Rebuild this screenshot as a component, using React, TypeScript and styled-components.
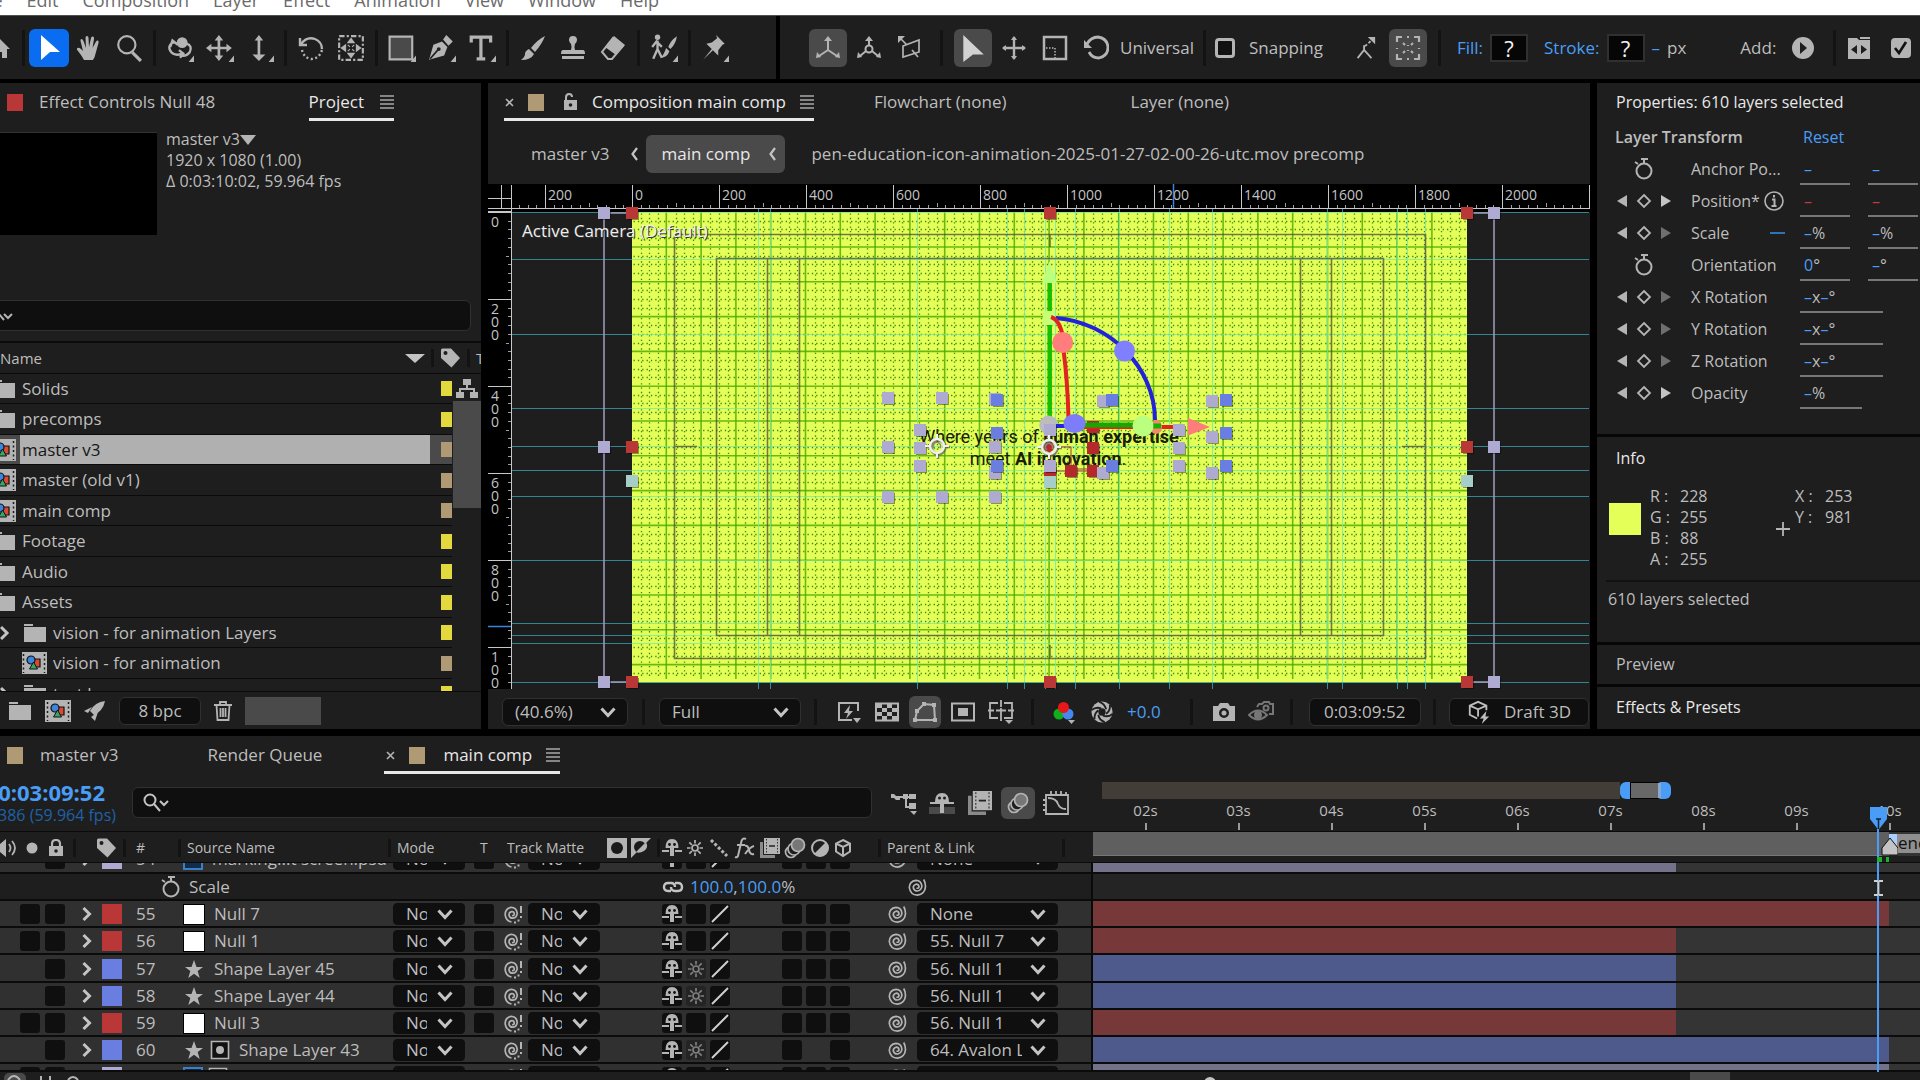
import React from "react";
import styled, { createGlobalStyle, css } from "styled-components";

const c = {
  panel: "#1e1e1e",
  well: "#0f0f0f",
  line: "#0b0b0b",
  text: "#bdbdbd",
  bright: "#e8e8e8",
  blue: "#4a9df6",
  row: "#303030",
  icon: "#b4b4b4",
  sand: "#b09a76",
  yellow: "#e4d83f",
  red: "#ba3737",
  indigo: "#6a7de0",
  lavender: "#aeaad2",
};

const Global = createGlobalStyle`
  *, *::before, *::after { box-sizing: border-box; }
  html, body { margin: 0; background: #000; }
  body { font-family: "Open Sans", "Noto Sans", sans-serif; font-size: 16px; line-height: 20px; color: ${c.text}; overflow: hidden; }
  button, input, select { font: inherit; color: inherit; }
  button { padding: 0; border: 0; background: none; }
  svg { display: block; flex: none; }
`;

/* ---------- shell ---------- */
const Shell = styled.div`
  min-height: 100vh;
  display: flex;
  flex-direction: column;
  background: #000;
`;
const MenuBar = styled.nav`
  height: 16px;
  background: #fff;
  border-bottom: 1px solid #4d524f;
  overflow: hidden;
  display: flex;
  align-items: flex-end;
  gap: 24px;
  padding: 0 0 2px;
  a { color: #6b6b6b; text-decoration: none; font-size: 18px; line-height: 26px; flex: none; }
  a:first-child { margin-left: -26px; }
`;
const ToolBar = styled.header`
  height: 63px;
  display: grid;
  grid-template-columns: 776px 1fr;
  column-gap: 4px;
  margin-bottom: 4px;
`;
const ToolGroup = styled.div<{ $start?: number }>`
  background: ${c.panel};
  display: flex;
  align-items: center;
  padding-left: ${(p) => p.$start || 0}px;
  overflow: hidden;
  white-space: nowrap;
`;
const Tool = styled.button<{ $fill?: string; $w?: number }>`
  width: ${(p) => p.$w || 40}px;
  height: 38px;
  flex: none;
  display: flex;
  align-items: center;
  justify-content: center;
  border-radius: 6px;
  background: ${(p) => p.$fill || "transparent"};
  color: ${c.icon};
`;
const ViewTool = styled(Tool)`
  height: 32px;
`;
const Divider = styled.i<{ $m?: number; $h?: number }>`
  flex: none;
  width: 3px;
  height: ${(p) => p.$h || 36}px;
  margin: 0 ${(p) => p.$m ?? 4}px;
  background: #131313;
`;
const Spacer = styled.span<{ $w?: number }>`
  flex: ${(p) => (p.$w ? "none" : "1")};
  width: ${(p) => p.$w || 0}px;
`;
const ToolLabel = styled.label<{ $blue?: boolean }>`
  font-size: 17px;
  flex: none;
  color: ${(p) => (p.$blue ? c.blue : c.text)};
`;
const Check = styled.input`
  appearance: none;
  margin: 0;
  width: 20px;
  height: 20px;
  flex: none;
  border: 3px solid ${c.icon};
  border-radius: 4px;
  background: #111;
  &:checked { background: ${c.icon}; }
`;
const CheckWrap = styled.span`
  display: grid;
  flex: none;
  > * { grid-area: 1 / 1; place-self: center; }
  svg { pointer-events: none; }
`;
const PaintButton = styled.button`
  width: 38px;
  height: 28px;
  flex: none;
  background: #060606;
  border: 2px solid #303030;
  color: #f2f2f2;
  font-size: 22px;
  line-height: 24px;
`;

const Panels = styled.main`
  display: grid;
  grid-template-columns: 481px minmax(0, 1fr) 323px;
  column-gap: 7px;
  height: 646px;
  margin-bottom: 7px;
`;
const Panel = styled.section`
  background: ${c.panel};
  display: flex;
  flex-direction: column;
  overflow: hidden;
  min-width: 0;
`;

/* ---------- tabs ---------- */
const Tabs = styled.div`
  display: flex;
  height: 38px;
  flex: none;
  font-size: 17px;
  white-space: nowrap;
`;
const Tab = styled.button<{ $active?: boolean; $ml?: number; $pl?: number; $gap?: number }>`
  display: flex;
  flex: none;
  align-items: center;
  gap: ${(p) => p.$gap || 16}px;
  margin-left: ${(p) => p.$ml || 0}px;
  padding-left: ${(p) => p.$pl || 0}px;
  padding-top: 3px;
  border-bottom: 3px solid ${(p) => (p.$active ? c.bright : "transparent")};
  color: ${(p) => (p.$active ? c.bright : c.text)};
`;
const Chip = styled.i<{ $c: string; $w?: number; $h?: number }>`
  width: ${(p) => p.$w || 16}px;
  height: ${(p) => p.$h || 17}px;
  background: ${(p) => p.$c};
  flex: none;
`;
const Hamburger = () => (
  <svg width="14" height="14" viewBox="0 0 14 14" stroke="#858585" strokeWidth="2">
    <path d="M0 1h14M0 5h14M0 9h14M0 13h14" />
  </svg>
);
const Close = () => (
  <svg width="9" height="9" viewBox="0 0 9 9" stroke={c.icon} strokeWidth="1.6">
    <path d="M1 1l7 7M8 1L1 8" />
  </svg>
);
const Chevron = ({ s = 16, w = 3 }: { s?: number; w?: number }) => (
  <svg width={s} height={s} viewBox="0 0 16 16" fill="none" stroke="#c4c4c4" strokeWidth={w}>
    <path d="M1.500 4.500L8 11.500l6.500-7" />
  </svg>
);

/* ---------- project ---------- */
const Summary = styled.div`
  display: flex;
  gap: 9px;
  height: 114px;
  padding-top: 8px;
  font-size: 16px;
  line-height: 21px;
  p { margin: 0; }
`;
const ItemName = styled.span`
  display: flex;
  align-items: center;
`;
const Thumb = styled.div`
  width: 157px;
  height: 103px;
  margin-top: 3px;
  background: #000;
  border-top: 1px solid #333;
`;
const SearchBox = styled.label`
  display: flex;
  align-items: center;
  height: 31px;
  background: ${c.well};
  border: 1px solid #303030;
  border-radius: 6px;
  padding-left: 10px;
  input { flex: 1; min-width: 0; border: 0; background: none; outline: 0; }
`;
const ProjectSearch = styled.div`
  padding: 65px 10px 10px 0;
  ${SearchBox} { padding-left: 3px; margin-left: -8px; }
`;
const ProjectTable = styled.table`
  display: block;
  flex: 1;
  min-height: 0;
  overflow: hidden;
  thead, tbody { display: block; }
  tr { display: flex; align-items: center; }
  th, td { display: flex; flex: none; align-items: center; padding: 0; font-weight: 400; }
  thead tr { height: 33px; border-top: 2px solid ${c.line}; border-bottom: 1px solid ${c.line}; font-size: 15px; }
  tbody { position: relative; }
`;
const NameHead = styled.th`
  && { width: 431px; justify-content: space-between; padding-right: 6px; }
`;
const TagHead = styled.th`
  gap: 6px;
`;
const ProjRow = styled.tr<{ $sel?: boolean }>`
  height: 30px;
  width: 452px;
  border-bottom: 1px solid ${c.line};
  background: ${(p) => (p.$sel ? "#4a4a4a" : "transparent")};
  font-size: 17px;
  &:nth-child(even) { height: 31px; }
`;
const ProjName = styled.td<{ $sel?: boolean }>`
  width: 430px;
  height: 100%;
  gap: 4px;
  margin-right: 11px;
  span {
    flex: 1; align-self: stretch; display: flex; align-items: center; padding-left: 2px;
    ${(p) => p.$sel && css`background: #b0b0b0; color: #161616;`}
  }
`;
const IconSlot = styled.i<{ $w: number; $end?: boolean }>`
  width: ${(p) => p.$w}px;
  flex: none;
  display: flex;
  justify-content: ${(p) => (p.$end ? "flex-end" : "flex-start")};
  overflow: hidden;
`;
const ScrollCol = styled.div`
  position: absolute;
  right: 0;
  top: 0;
  width: 28px;
  padding-top: 5px;
  display: flex;
  flex-direction: column;
  align-items: center;
  gap: 3px;
  i { width: 28px; height: 107px; background: #4a4a4a; }
`;
const ProjectFoot = styled.footer`
  height: 38px;
  flex: none;
  display: flex;
  align-items: center;
  padding-left: 8px;
  border-top: 1px solid ${c.line};
  gap: 13px;
`;
const Pill = styled.button<{ $w: number }>`
  width: ${(p) => p.$w}px;
  height: 28px;
  display: flex;
  align-items: center;
  justify-content: center;
  gap: 13px;
  flex: none;
  background: ${c.well};
  border: 1px solid #303030;
  border-radius: 6px;
  font-size: 17px;
`;

const Folder = () => (
  <svg width="24" height="20" viewBox="0 0 24 20" fill={c.icon}>
    <path d="M1 1h9v2H1zM1 4h22v15H1z" />
  </svg>
);
const CompIcon = () => (
  <svg width="26" height="22" viewBox="0 0 26 22">
    <path fill={c.icon} d="M0 0h26v22H0z" />
    <path stroke="#1a1a1a" strokeWidth="1.500" strokeDasharray="2 2.500" d="M2.500 2v19M23.500 2v19" />
    <path d="M12 7h7v8h-6z" fill="#d94a35" stroke="#111" strokeWidth="1.200" />
    <circle cx="10" cy="8" r="4" fill="#3d84dc" stroke="#111" strokeWidth="1.200" />
    <path d="M12.500 10l4 7h-8z" fill="#35a866" stroke="#111" />
  </svg>
);
const TagIcon = () => (
  <svg width="21" height="20" viewBox="0 0 21 20">
    <path fill={c.icon} d="M1 2q0-1.500 1.500-1.500H11l9 9.500-8.500 9.500L1 10z" />
    <circle cx="5.500" cy="5" r="2" fill={c.panel} />
  </svg>
);

type P = { k: "folder" | "comp"; n: string; c: string; sel?: boolean; sub?: boolean; open?: boolean };
const project: P[] = [
  { k: "folder", n: "Solids", c: c.yellow },
  { k: "folder", n: "precomps", c: c.yellow },
  { k: "comp", n: "master v3", c: c.sand, sel: true },
  { k: "comp", n: "master (old v1)", c: c.sand },
  { k: "comp", n: "main comp", c: c.sand },
  { k: "folder", n: "Footage", c: c.yellow },
  { k: "folder", n: "Audio", c: c.yellow },
  { k: "folder", n: "Assets", c: c.yellow },
  { k: "folder", n: "vision - for animation Layers", c: c.yellow, sub: true, open: true },
  { k: "comp", n: "vision - for animation", c: c.sand, sub: true },
  { k: "folder", n: "test logo", c: c.yellow, sub: true, open: true },
];

const ProjectPanel = () => (
  <Panel>
    <Tabs>
      <Tab $ml={7}>
        <Chip $c={c.red} />
        Effect Controls Null 48
      </Tab>
      <Spacer />
      <Tab $active>
        Project <Hamburger />
      </Tab>
      <Spacer $w={87} />
    </Tabs>
    <Summary>
      <Thumb />
      <p>
        <ItemName>
          master v3
          <svg width="16" height="10" viewBox="0 0 16 10" fill={c.icon}><path d="M0 0h16L8 10z" /></svg>
        </ItemName>
        1920 x 1080 (1.00)
        <br />Δ 0:03:10:02, 59.964 fps
      </p>
    </Summary>
    <ProjectSearch>
      <SearchBox>
        <svg width="18" height="14" viewBox="0 0 18 14" fill="none" stroke={c.icon} strokeWidth="2">
          <path d="M3 5l5 6M8 5l4 4 4-4" />
        </svg>
        <input aria-label="Search project" />
      </SearchBox>
    </ProjectSearch>
    <ProjectTable>
      <thead>
        <tr>
          <NameHead>
            Name
            <svg width="20" height="10" viewBox="0 0 20 10" fill="#c4c4c4">
              <path d="M0 1h20L10 10z" />
            </svg>
          </NameHead>
          <TagHead>
            <Divider $h={18} $m={0} />
            <TagIcon />
            <Divider $h={18} $m={0} />T
          </TagHead>
        </tr>
      </thead>
      <tbody>
        {project.map((r) => (
          <ProjRow key={r.n} $sel={r.sel}>
            <ProjName $sel={r.sel}>
              {r.sub && (
                <IconSlot $w={18}>
                  {r.open && (
                    <svg width="10" height="16" viewBox="0 0 10 16" fill="none" stroke="#c4c4c4" strokeWidth="3">
                      <path d="M1 2l6 6-6 6" />
                    </svg>
                  )}
                </IconSlot>
              )}
              <IconSlot $w={r.sub ? 25 : 16} $end>
                {r.k === "folder" ? <Folder /> : <CompIcon />}
              </IconSlot>
              <span>{r.n}</span>
            </ProjName>
            <td>
              <Chip $c={r.c} $w={11} $h={15} />
            </td>
          </ProjRow>
        ))}
        <tr>
          <td>
            <ScrollCol>
              <svg width="22" height="19" viewBox="0 0 22 19" fill={c.icon}>
                <path d="M7 0h8v6H7zM0 13h8v6H0zM14 13h8v6h-8zM10 6h2v3h7v4h-2v-2H5v2H3V9h7z" />
              </svg>
              <i />
            </ScrollCol>
          </td>
        </tr>
      </tbody>
    </ProjectTable>
    <ProjectFoot>
      <Folder />
      <CompIcon />
      <svg width="22" height="22" viewBox="0 0 22 22" fill={c.icon}>
        <path d="M21 1Q11 2 6 11l4 4Q19 11 21 1zM0 11l8-4-4 6zM11 21l3-9-7 5z" />
      </svg>
      <Pill $w={82}>8 bpc</Pill>
      <svg width="18" height="20" viewBox="0 0 18 20" fill="none" stroke={c.icon} strokeWidth="1.800">
        <path d="M0 4h18M6 4V1h6v3M2.500 4l1 15h11l1-15M6.500 7v9M9 7v9M11.500 7v9" />
      </svg>
      <Chip $c="#4a4a4a" $w={76} $h={28} />
    </ProjectFoot>
  </Panel>
);

/* ---------- composition ---------- */
const Crumbs = styled.nav`
  height: 63px;
  flex: none;
  display: flex;
  align-items: center;
  padding: 2px 0 0 43px;
  font-size: 17px;
  gap: 22px;
  white-space: nowrap;
`;
const Crumb = styled.a<{ $on?: boolean }>`
  display: flex;
  align-items: center;
  justify-content: space-between;
  color: ${c.text};
  text-decoration: none;
  ${(p) => p.$on && css`
    width: 139px; height: 38px; margin: 0 4px 0 -14px; padding: 0 9px 0 15px;
    background: #4a4a4a; border-radius: 6px; color: ${c.bright};
  `}
`;
const Back = () => (
  <svg width="7" height="14" viewBox="0 0 7 14" fill="none" stroke="#c4c4c4" strokeWidth="2.200">
    <path d="M6 1L1.500 7 6 13" />
  </svg>
);
const Stage = styled.div`
  flex: 1;
  min-height: 0;
  overflow: hidden;
`;
const ViewBar = styled.footer`
  height: 40px;
  flex: none;
  display: flex;
  align-items: center;
  padding: 6px 1px 0 14px;
  white-space: nowrap;
`;
const Pick = styled.span<{ $w: number; $h?: number; $clip?: number; $b?: boolean }>`
  display: grid;
  flex: none;
  width: ${(p) => p.$w}px;
  height: ${(p) => p.$h || 28}px;
  background: ${c.well};
  border: 1px solid ${(p) => (p.$b ? "#303030" : c.well)};
  border-radius: ${(p) => (p.$b ? 6 : 4)}px;
  align-items: center;
  > * { grid-area: 1 / 1; }
  svg { justify-self: end; margin-right: 11px; pointer-events: none; }
  select {
    appearance: none;
    border: 0;
    outline: 0;
    background: none;
    width: ${(p) => p.$clip || p.$w - 30}px;
    padding: 0 0 0 12px;
    overflow: hidden;
    text-overflow: clip;
    font-size: 17px;
  }
`;
const Select = ({ w, h, clip, b, v, label }: { w: number; h?: number; clip?: number; b?: boolean; v: string; label: string }) => (
  <Pick $w={w} $h={h} $clip={clip} $b={b}>
    <select aria-label={label} defaultValue={v}>
      <option>{v}</option>
    </select>
    <Chevron />
  </Pick>
);

const X0 = 632;
const Y0 = 212;
const U = 0.435;
const range = (a: number, b: number, s = 1) => {
  const out: number[] = [];
  for (let i = a; i <= b; i += s) out.push(i);
  return out;
};
const vGuides = [758.5, 770.5, 917.5, 1007.5, 1024.5, 1045.5, 1055.5, 1075.5, 1119.5, 1169.5, 1212.5, 1327.5, 1342.5, 1397.5, 1407.5, 1425.5];
const hGuides = [212.5, 259.5, 334.5, 408.5, 446.5, 470.5, 496.5, 560.5, 623.5, 635.5, 643.5, 682.5];
const lav = [[888, 398], [942, 398], [995, 399], [920, 430], [920, 448], [920, 466], [888, 447], [995, 447], [995, 473], [888, 497], [942, 497], [995, 497], [1103, 401], [1103, 473], [1179, 430], [1179, 448], [1179, 466], [1212, 401], [1212, 437], [1212, 473]];
const blu = [[997, 400], [997, 433], [997, 466], [1112, 400], [1112, 466], [1226, 400], [1226, 433], [1226, 466]];
const redBack = [[1093, 427], [1093, 448], [1093, 471], [1071, 471], [1050, 471]];
const edgeLav = [604, 1494].flatMap((x) => [213, 447, 682].map((y) => [x, y]));
const edgeRed = [632, 1467].flatMap((x) => [213, 447, 682].map((y) => [x, y])).concat([[1050, 213], [1050, 682]]);

const Handles = ({ at, fill }: { at: number[][]; fill: string }) => (
  <g>
    {at.map(([x, y], i) => (
      <g key={i}>
        <rect x={x - 4} y={y - 4} width="11" height="11" fill="#00000066" />
        <rect x={x - 6} y={y - 6} width="12" height="12" fill={fill} />
      </g>
    ))}
  </g>
);
const Anchor = ({ x, y }: { x: number; y: number }) => (
  <g transform={`translate(${x} ${y})`} fill="none">
    <g stroke="#5a5a48" strokeOpacity=".7" transform="translate(1 1)">
      <path d="M0-12v5M0 7v5M-12 0h5M7 0h5" strokeWidth="2.500" />
      <circle r="7" strokeWidth="3.500" />
    </g>
    <path d="M0-12v5M0 7v5M-12 0h5M7 0h5" stroke="#f0f0f0" strokeWidth="2" />
    <circle r="7" stroke="#f0f0f0" strokeWidth="2.500" />
    <path d="M-2 3a3.600 3.600 0 1 1 5-1" stroke="#888" strokeWidth="1.500" />
  </g>
);

const Viewer = () => (
  <svg width="1102" height="505" viewBox="488 184 1102 505" fontFamily='"Open Sans", sans-serif'>
    <defs>
      <clipPath id="comp"><path d="M632 212h835v470H632z" /></clipPath>
    </defs>
    <path fill="#000" d="M488 184h1102v28H488zM488 184h24v505h-24z" />
    <path fill={c.panel} d="M512 212h1078v477H512z" />
    <path fill="#e4ff58" d="M632 212h835v470H632z" />
    {/* proportional grid: dotted subdivisions under solid main lines */}
    <g stroke="#2f7a00" strokeWidth="1.300" strokeOpacity=".9" strokeDasharray="1.300 3.050" strokeDashoffset="-1.500" clipPath="url(#comp)">
      {range(1, 95).filter((i) => i % 4).map((i) => <path key={i} d={`M${Math.round(X0 + i * 8.7) + 0.5} 212v467`} />)}
      {range(1, 53).filter((i) => i % 4).map((i) => <path key={i} d={`M632 ${Math.round(Y0 + i * 8.7) + 0.5}h835`} />)}
    </g>
    <g stroke="#4aa800" strokeWidth="1.600" strokeOpacity=".8" clipPath="url(#comp)">
      {range(1, 23).map((i) => <path key={i} d={`M${X0 + i * 34.8 - 0.5} 212v467`} />)}
      {range(1, 13).map((i) => <path key={i} d={`M632 ${Y0 + i * 34.8 + 0.2}h835`} />)}
    </g>
    <g stroke="#38a9b5">
      {hGuides.map((y) => (
        <g key={y}>
          <path d={`M512 ${y}h120M1467 ${y}h122`} strokeOpacity=".75" />
          <path d={`M632 ${y}h835`} stroke="#6be8a8" strokeOpacity=".7" />
        </g>
      ))}
      {vGuides.map((x) => (
        <g key={x}>
          <path d={`M${x} 682v7M${x} 209v3`} strokeOpacity=".8" />
          <path d={`M${x} 212v470`} stroke="#6bebb4" strokeOpacity=".8" />
        </g>
      ))}
    </g>
    <path d="M674.500 234.500h751v424h-751zM716.500 258.500h667v377h-667zM767.500 258.500v377M799.500 258.500v377M1300.500 258.500v377M1331.500 258.500v377M675 446.500h22M1402 446.500h23M1050 235v12M1050 645v14" fill="none" stroke="#4f4a3a" strokeOpacity=".75" strokeWidth="1.600" />
    <path d="M604 213v470M1494 213v470M604 213h28M604 682h28M1467 213h27M1467 682h27" stroke="#a19fc0" strokeWidth="1.500" />

    {/* rulers */}
    <g stroke="#c8c8c8" fill="none">
      <path d="M488 208.500h1101M488 211.500h24M511.500 185v504M501.500 185v23M488 198.500h23M1589.500 185v24" />
      {range(-200, 2000, 200).map((v) => <path key={v} d={`M${Math.round(X0 + v * U) + 0.5} 185v23`} />)}
      {range(-260, 2180, 20).map((v) => <path key={v} strokeOpacity=".8" d={`M${Math.round(X0 + v * U) + 0.5} ${v % 100 === 0 ? 203 : 205}v4`} />)}
      {range(0, 1000, 200).map((v) => <path key={v} d={`M488 ${Math.round(Y0 + v * U) + 0.5}h23`} />)}
      {range(0, 1080, 20).map((v) => <path key={v} strokeOpacity=".8" d={`M${v % 100 === 0 ? 506 : 508} ${Math.round(Y0 + v * U) + 0.5}h3`} />)}
    </g>
    <g fill="#c4c4c4" fontSize="14">
      {range(-200, 2000, 200).map((v) => <text key={v} x={X0 + v * U + 3} y="200">{Math.abs(v)}</text>)}
      {range(0, 1000, 200).map((v) =>
        String(v).slice(0, 3).split("").map((d, i) => (
          <text key={`${v}-${i}`} x="491" y={Y0 + v * U + 15 + i * 13}>{d}</text>
        ))
      )}
    </g>
    <path d="M1173.500 184v24M488 626.500h23" stroke="#3c83dd" strokeWidth="1.500" />

    <g fontSize="17">
      <text x="523" y="238" fill="#333" aria-hidden="true">Active Camera (Default)</text>
      <text x="522" y="237" fill="#eeeeee">Active Camera (Default)</text>
    </g>

    {/* artwork copy */}
    <g fontFamily="Roboto, sans-serif" fontSize="18" fill="#18200a" textAnchor="middle">
      <text x="1049" y="443">Where years of <tspan fontWeight="700">human expertise</tspan></text>
      <text x="1048" y="465">meet <tspan fontWeight="700">AI innovation</tspan>.</text>
    </g>

    <path d="M1050 447h21v22h22M1050 447v24h43" fill="none" stroke="#a83030" strokeWidth="1" />
    <Handles at={redBack} fill="#b5282c" />
    <Handles at={edgeLav} fill={c.lavender} />
    <Handles at={edgeRed} fill={c.red} />
    <Handles at={[[632, 481], [1467, 481], [1050, 482]]} fill="#a6cdc8" />

    {/* transform gizmo */}
    <g fill="none" strokeWidth="4">
      <path d="M1049.700 283v28M1049.700 325v100" stroke="#16c000" strokeWidth="4.500" />
      <path d="M1042 283l7.500-22 7.500 22z" fill="#baff7d" />
      <path d="M1043 311h12v14h-12z" fill="#c6ff74" />
      <circle cx="1048.700" cy="425" r="9.500" fill="#bcbcbc" />
      <path d="M1054 426h12" stroke="#2222e0" />
      <path d="M1056 318C1110 322 1155 368 1155 420" stroke="#2222d8" />
      <path d="M1051 317q10 3 13 26M1063.500 350q4 30 5 68" stroke="#e32222" />
      <path d="M1084 427h51M1161 427h14" stroke="#e32222" />
      <path d="M1084 425h53" stroke="#16a800" strokeWidth="5" />
      <circle cx="1062.700" cy="342.500" r="10.500" fill="#ff7d7d" />
      <circle cx="1124.500" cy="351" r="10.500" fill="#7f7fff" />
      <ellipse cx="1074.500" cy="423.500" rx="11" ry="9.500" fill="#7d7dfa" />
      <ellipse cx="1156" cy="427" rx="6" ry="7" fill="#f08a6a" />
      <path d="M1152 426h9" stroke="#16b000" strokeWidth="5" />
      <circle cx="1143" cy="426" r="10.500" fill="#bbff7f" />
      <path d="M1188 418l22 9-22 8.500z" fill="#ff7c7c" />
    </g>
    <Handles at={lav} fill={c.lavender} />
    <Handles at={blu} fill={c.indigo} />
    <Handles at={[[1050, 430], [1050, 466]]} fill={c.lavender} />
    <Anchor x={937} y={446} />
    <circle cx="1049" cy="447" r="5" fill="#b5282c" />
    <Anchor x={1049} y={447} />
  </svg>
);

const I = ({ children, s = 26, f }: { children: React.ReactNode; s?: number; f?: boolean }) => (
  <svg width={s} height={s} viewBox="0 0 26 26" fill={f ? "currentColor" : "none"} stroke={f ? "none" : "currentColor"} strokeWidth="2">
    {children}
  </svg>
);
const Corner = () => <path d="M26 20v6h-5z" fill="currentColor" stroke="none" />;

const CompPanel = () => (
  <Panel>
    <Tabs>
      <Tab $active $ml={16} $pl={1} $gap={14}>
        <Close />
        <Chip $c={c.sand} />
        <svg width="20" height="18" viewBox="-5 0 20 18">
          <path d="M3 8V4.500Q3 1 6 1t3 3" fill="none" stroke={c.icon} strokeWidth="2" />
          <path fill={c.icon} d="M1 7h13v10H1z" />
          <circle cx="7.500" cy="12" r="1.800" fill={c.panel} />
        </svg>
        Composition main comp
        <Hamburger />
      </Tab>
      <Tab $ml={60}>Flowchart (none)</Tab>
      <Tab $ml={124}>Layer (none)</Tab>
    </Tabs>
    <Crumbs>
      <Crumb href="#">master v3</Crumb>
      <Back />
      <Crumb href="#" $on>
        main comp <Back />
      </Crumb>
      <Crumb href="#">pen-education-icon-animation-2025-01-27-02-00-26-utc.mov precomp</Crumb>
    </Crumbs>
    <Stage>
      <Viewer />
    </Stage>
    <ViewBar>
      <Select w={126} b v="(40.6%)" label="Magnification" />
      <Divider $m={14} $h={26} />
      <Select w={142} b v="Full" label="Resolution" />
      <Divider $m={13} $h={26} />
      <ViewTool $w={38}><I><path d="M22 12V4H3v17h13" /><path d="M14 6l-6 8h4l-2 6 7-8h-4z" fill="currentColor" stroke="none" /><path d="M17 19h8l-4 5z" fill="currentColor" stroke="none" /></I></ViewTool>
      <ViewTool $w={38}><I><path d="M2 4.500h22v17H2z" /><path d="M3 5h5v4H3zM13 5h5v4h-5zM8 9h5v4H8zM18 9h5v4h-5zM3 13h5v4H3zM13 13h5v4h-5zM8 17h5v4H8zM18 17h5v4h-5z" fill="currentColor" stroke="none" /></I></ViewTool>
      <Spacer $w={3} />
      <ViewTool $w={32} $fill="#4a4a4a"><I><path d="M3 21l2-9 7-7 10 1 1 15z" /><path d="M1 19h4v4H1zM3 10h4v4H3zM10 3h4v4h-4zM20 4h4v4h-4zM21 19h4v4h-4z" fill="currentColor" stroke="none" /></I></ViewTool>
      <Spacer $w={3} />
      <ViewTool $w={38}><I><path d="M2 4.500h22v17H2z" /><path d="M8 9h10v8H8z" fill="currentColor" stroke="none" /></I></ViewTool>
      <ViewTool $w={38}><I><path d="M10 4H2v15h8M16 4h8v15h-8M13 1v7M13 14v8M0 11.500h6M20 11.500h6M8 11.500h10M13 9v5" strokeWidth="1.800" /><path d="M17 21h8l-4 4z" fill="currentColor" stroke="none" /></I></ViewTool>
      <Divider $m={11} $h={26} />
      <ViewTool $w={38}>
        <svg width="24" height="24" viewBox="0 0 24 24"><circle cx="7" cy="14" r="5.500" fill="#0fae1c" /><circle cx="16" cy="14" r="5.500" fill="#4787f0" /><circle cx="11.500" cy="7.500" r="5.500" fill="#ea1717" /><path d="M16 20h7l-3.500 4z" fill={c.icon} /></svg>
      </ViewTool>
      <ViewTool $w={38}>
        <svg width="22" height="22" viewBox="0 0 24 24" fill={c.icon}>
          <circle cx="12" cy="12" r="11.500" />
          <circle cx="12" cy="12" r="4" fill={c.panel} />
          <path d="M9 1q6 2 7.500 8M20.500 4q1 6-4 10M23.500 14q-4.500 4-10.500 2M15 23q-6-2-7-8M4 20q-1-6 4-10M.5 10Q5 6 11 8" fill="none" stroke={c.panel} strokeWidth="2" />
        </svg>
      </ViewTool>
      <Spacer $w={6} />
      <ToolLabel as="span" $blue>+0.0</ToolLabel>
      <Spacer $w={11} />
      <Divider $m={18} $h={26} />
      <ViewTool $w={26}><I><path fillRule="evenodd" d="M2 7h5l2-3h8l2 3h5v15H2zM13 9a5 5 0 100 10 5 5 0 000-10zM13 11.500a2.500 2.500 0 110 5 2.500 2.500 0 010-5z" fill="currentColor" stroke="none" /></I></ViewTool>
      <Spacer $w={11} />
      <ViewTool $w={26}>
        <svg width="26" height="26" viewBox="0 0 26 26" fill="none" stroke="#777" strokeWidth="2"><path d="M1 16q9-9 18 0-9 9-18 0z" /><circle cx="10" cy="16" r="3" fill="#777" /><path d="M9 8l2-3h3l2-2h5l1 2h3v10h-4" /><circle cx="18" cy="9" r="2.500" /></svg>
      </ViewTool>
      <Divider $m={16} $h={26} />
      <Pill $w={112}>0:03:09:52</Pill>
      <Spacer />
      <Divider $m={0} $h={26} />
      <Spacer />
      <Pill $w={140}>
        <I s={24}><path d="M11 20l-8-4V6l9-4 9 4v5M3 6l9 4 9-4M12 10v8" /><path d="M21 12l-7 8h4l-2 6 8-8h-4z" fill="currentColor" stroke="none" /></I>
        Draft 3D
      </Pill>
    </ViewBar>
  </Panel>
);

/* ---------- properties / info ---------- */
const Title = styled.h2<{ $h: number; $dim?: boolean; $bt?: boolean }>`
  margin: 0;
  height: ${(p) => p.$h}px;
  flex: none;
  padding: 0 0 ${(p) => (p.$bt ? 2 : 0)}px 19px;
  display: flex;
  align-items: center;
  font-size: 16px;
  font-weight: 400;
  color: ${(p) => (p.$dim ? c.text : c.bright)};
  border-top: ${(p) => (p.$bt ? 3 : 0)}px solid #060606;
`;
const PropHead = styled.div`
  display: grid;
  grid-template-columns: 188px 1fr;
  padding-left: 18px;
  height: 32px;
  align-items: center;
  flex: none;
  font-size: 16px;
  b { font-weight: 600; }
  button { color: ${c.blue}; justify-self: start; }
`;
const PropRow = styled.div`
  display: grid;
  grid-template-columns: 74px 79px 30px 68px 1fr;
  padding-left: 20px;
  height: 32px;
  align-items: end;
  flex: none;
  white-space: nowrap;
`;
const PropCell = styled.span<{ $w?: number }>`
  width: ${(p) => (p.$w ? `${p.$w}px` : "auto")};
  height: 30px;
  display: flex;
  align-items: center;
  border-bottom: 2px solid ${(p) => (p.$w ? "#777" : "transparent")};
  padding-left: ${(p) => (p.$w ? 4 : 0)}px;
  em { font-style: normal; color: ${c.blue}; }
  em.red { color: #c93b3b; }
`;
const Stopwatch = () => (
  <svg width="20" height="22" viewBox="0 0 20 22" fill="none" stroke={c.icon} strokeWidth="2">
    <circle cx="10" cy="13" r="7.500" />
    <path d="M10 5V1M7 1h7M1 4l3 2" />
  </svg>
);
const KeyNav = ({ on }: { on?: boolean }) => (
  <svg width="54" height="16" viewBox="0 0 54 16">
    <path d="M10 2v12L0 8z" fill={c.icon} />
    <path d="M27 2l6 6-6 6-6-6z" fill="none" stroke={c.icon} strokeWidth="1.800" />
    <path d="M44 2v12l10-6z" fill={on ? "#c4c4c4" : "#6f6f6f"} />
  </svg>
);
const D = ({ red }: { red?: boolean }) => <em className={red ? "red" : undefined}>–</em>;
const props: { n: string; nav: 0 | 1 | 2; extra?: React.ReactNode; a: React.ReactNode; b?: React.ReactNode; w?: number }[] = [
  { n: "Anchor Po...", nav: 0, a: <D />, b: <D /> },
  {
    n: "Position*", nav: 2, a: <D red />, b: <D red />,
    extra: (
      <svg width="20" height="20" viewBox="6 0 20 20" overflow="visible" fill="none" stroke={c.icon} strokeWidth="1.600">
        <circle cx="10" cy="10" r="9" /><path d="M10 4v2.500M8 8.500h2.500V15M7.500 15h5" strokeWidth="2" />
      </svg>
    ),
  },
  { n: "Scale", nav: 1, a: <><D />%</>, b: <><D />%</>, extra: <Chip $c="#2f72b8" $w={15} $h={2} /> },
  { n: "Orientation", nav: 0, a: <><em>0</em>°</>, b: <><D />°</> },
  { n: "X Rotation", nav: 1, a: <><D />x<D />°</>, w: 83 },
  { n: "Y Rotation", nav: 1, a: <><D />x<D />°</>, w: 83 },
  { n: "Z Rotation", nav: 1, a: <><D />x<D />°</>, w: 83 },
  { n: "Opacity", nav: 2, a: <><D />%</>, w: 62 },
];
const InfoBody = styled.div`
  display: grid;
  grid-template-columns: 32px 117px 10px 1fr;
  column-gap: 9px;
  padding: 6px 0 8px 12px;
  height: 100px;
  flex: none;
  line-height: 21px;
  dl { margin: 0; display: grid; grid-template-columns: 30px 1fr; align-content: start; }
  dd { margin: 0; }
`;
const InfoSwatch = styled.i`
  height: 32px;
  margin-top: 17px;
  background: #e4ff58;
`;
const InfoNote = styled.p`
  margin: 0 0 0 9px;
  height: 62px;
  flex: none;
  border-top: 2px solid #121212;
  padding: 7px 0 0 2px;
`;

const SidePanel = () => (
  <Panel>
    <Title $h={38}>Properties: 610 layers selected</Title>
    <PropHead>
      <b>Layer Transform</b>
      <button>Reset</button>
    </PropHead>
    {props.map((p) => (
      <PropRow key={p.n}>
        <PropCell>{p.nav ? <KeyNav on={p.nav === 2} /> : <><Spacer $w={17} /><Stopwatch /></>}</PropCell>
        <PropCell>{p.n}</PropCell>
        <PropCell>{p.extra}</PropCell>
        <PropCell $w={p.w || 50}>{p.a}</PropCell>
        {p.b && <PropCell $w={50}>{p.b}</PropCell>}
      </PropRow>
    ))}
    <Spacer />
    <Title $h={46} $bt>Info</Title>
    <InfoBody>
      <InfoSwatch />
      <dl>
        <dt>R :</dt><dd>228</dd><dt>G :</dt><dd>255</dd><dt>B :</dt><dd>88</dd><dt>A :</dt><dd>255</dd>
      </dl>
      <svg width="14" height="60" viewBox="0 0 14 60" stroke={c.icon} strokeWidth="1.800"><path d="M0 43h14M7 36v14" /></svg>
      <dl>
        <dt>X :</dt><dd>253</dd><dt>Y :</dt><dd>981</dd>
      </dl>
    </InfoBody>
    <InfoNote>610 layers selected</InfoNote>
    <Title $h={42} $bt $dim>Preview</Title>
    <Title $h={45} $bt>Effects &amp; Presets</Title>
  </Panel>
);

/* ---------- timeline ---------- */
const LEFT = 1091;
const Timeline = styled.section`
  position: relative;
  flex: 1;
  background: ${c.panel};
  overflow: hidden;
  display: flex;
  flex-direction: column;
`;
const Split = styled.div`
  display: grid;
  grid-template-columns: ${LEFT}px minmax(0, 1fr);
  column-gap: 2px;
  height: 57px;
  flex: none;
`;
const Controls = styled.div`
  display: flex;
  align-items: center;
  ${SearchBox} { width: 740px; margin-left: auto; }
`;
const Clock = styled.div`
  width: 116px;
  flex: none;
  display: flex;
  flex-direction: column;
  white-space: nowrap;
  strong { color: ${c.blue}; font-size: 22px; line-height: 25px; align-self: flex-end; margin-right: 11px; }
  span { color: #1f62a8; font-size: 16px; align-self: flex-end; }
`;
const TimeNav = styled.div`
  display: flex;
  height: 17px;
  margin: 8px 0 0 9px;
  i { height: 17px; }
  i:nth-child(1) { width: 518px; background: #433d37; }
  i:nth-child(2) { width: 10px; background: ${c.blue}; border-radius: 6px 0 0 6px; }
  i:nth-child(3) { width: 31px; background: #686868; border: 1px solid #000; border-right: 3px solid #8aa8cc; }
  i:nth-child(4) { width: 10px; background: ${c.blue}; border-radius: 0 6px 6px 0; }
`;
const Ruler = styled.ol`
  list-style: none;
  margin: 0 0 0 6px;
  padding: 0;
  display: flex;
  height: 31px;
  font-size: 15px;
  li { width: 93px; flex: none; display: flex; flex-direction: column; align-items: center; justify-content: space-between; line-height: 22px; }
  li::after { content: ""; width: 2px; height: 7px; background: #9a9a9a; }
`;
const WorkArea = styled.div`
  height: 24px;
  display: flex;
  background: #343434;
  i { width: 796px; background: #5f5f5f; border-bottom: 1px solid #777; }
`;
const Marker = styled.span`
  margin-top: 2px;
  height: 19px;
  flex: 1;
  background: #8f8f8f;
  border-left: 8px solid #a8d0ff;
  padding-left: 1px;
  color: #111;
  font-size: 17px;
  line-height: 18px;
  overflow: hidden;
`;
const LayerTable = styled.table`
  display: block;
  thead, tbody { display: block; }
  th, td { display: flex; align-items: center; padding: 0; font-weight: 400; min-width: 0; }
`;
const HeadRow = styled.tr`
  display: grid;
  grid-template-columns: 136px 51px 210px 74px 36px 100px 55px 225px 204px 2px minmax(0, 1fr);
  height: 32px;
  border-top: 1px solid ${c.line};
  border-bottom: 1px solid ${c.line};
  font-size: 14px;
  white-space: nowrap;
  th { gap: 4px; padding-top: 1px; }
  th:last-child { display: block; padding: 0; }
`;
const Row = styled.tr<{ $h: number; $prop?: boolean; $end?: boolean }>`
  display: grid;
  grid-template-columns: 82px 20px 34px 47px 210px 81px 29px 25px 134px 225px 30px 174px minmax(0, 1fr);
  grid-template-rows: 100%;
  height: ${(p) => p.$h}px;
  overflow: hidden;
  align-items: ${(p) => (p.$end ? "end" : "start")};
  background: ${(p) => (p.$prop ? c.panel : c.row)};
  border-bottom: 2px solid ${c.line};
  font-size: 17px;
  white-space: nowrap;
  td { height: ${(p) => (p.$h < 20 ? 26 : p.$h - 1)}px; gap: 5px; }
`;
const SwitchCell = styled.td`
  && { gap: 4px; }
`;
const Box = styled.i<{ $off?: boolean; $lit?: boolean }>`
  width: 20px;
  height: 20px;
  flex: none;
  border-radius: 3px;
  display: flex;
  align-items: center;
  justify-content: center;
  background: ${(p) => (p.$off ? "transparent" : p.$lit ? "#242424" : "#0f0f0f")};
`;
const NullIcon = styled.i`
  width: 22px;
  height: 21px;
  flex: none;
  background: #fff;
  border: 1px solid #000;
`;
const LayerName = styled.span`
  padding-left: 4px;
`;
const PsdIcon = styled.i`
  width: 20px;
  height: 21px;
  flex: none;
  background: #0f2c4c;
  border: 2px solid #3f7fc0;
`;
const Track = styled.td`
  border-left: 2px solid #0a0a0a;
  background: #343434;
`;
const PropTrack = styled.td`
  border-left: 2px solid #0a0a0a;
  background: #242424;
`;
const Bar = styled.i<{ $w: number; $c: string }>`
  width: ${(p) => p.$w}px;
  align-self: stretch;
  background: ${(p) => p.$c};
`;
const Value = styled.span`
  em { color: ${c.blue}; font-style: normal; }
`;
const Playhead = styled.div`
  position: absolute;
  left: 1868px;
  top: 71px;
  pointer-events: none;
`;
const Bottom = styled.footer`
  flex: none;
  height: 8px;
  display: grid;
  grid-template-columns: 1200px 490px 40px;
  overflow: hidden;
  > i:last-child { background: #4a4a4a; }
`;
const Knob = styled.i`
  width: 12px;
  height: 12px;
  margin: 5px 0 0 4px;
  border-radius: 6px;
  background: #c4c4c4;
`;

const Spiral = ({ dots }: { dots?: boolean }) => (
  <svg width="20" height="20" viewBox="0 0 20 20" fill="none" stroke={c.icon} strokeWidth="1.700">
    {dots ? (
      <>
        <path d="M9 11.500q2.300.5 2.300-1.600Q11 7.500 8.700 7.700 5.800 8.200 6 11.200q.8 3.300 4 3 4-.7 4.200-5Q13.500 3.200 8 3.300 2 4.500 2.200 11q1 6 6.300 7" />
        <path d="M18 2v7M18 12v2M14.500 16.500h2M11 18.500h2" strokeWidth="2" />
      </>
    ) : (
      <path d="M9.500 11q2.300.8 2.500-1.300Q11.500 7 9 7.200 6 8 6.300 11q1 3.200 4.300 3 4-.8 4.300-5Q14.200 3.500 9 3.300 2.500 4 2.300 10.500q1 7.300 8.200 7.700Q18 17 18.500 9.500q0-4-1.800-7" />
    )}
  </svg>
);
const Shy = () => (
  <svg width="20" height="20" viewBox="0 0 20 20" fill={c.icon}>
    <path d="M3.500 10Q3.500 1 10 1t6.500 9zM0 12h7v2H0zM13 12h7v2h-7zM8 10h4v8H8z" />
    <circle cx="7.500" cy="6.500" r="1.400" fill="#111" />
    <circle cx="12.500" cy="6.500" r="1.400" fill="#111" />
  </svg>
);
const Sun = ({ dim }: { dim?: boolean }) => (
  <svg width="18" height="18" viewBox="0 0 18 18" fill="none" stroke={dim ? "#808080" : c.icon} strokeWidth="1.700">
    <circle cx="9" cy="9" r="3" />
    <path d="M9 1v3.500M9 13.500V17M1 9h3.500M13.500 9H17M3.300 3.300L6 6M12 12l2.700 2.700M14.700 3.300L12 6M6 12l-2.700 2.700" />
  </svg>
);
const Slash = () => (
  <svg width="20" height="20" viewBox="0 0 20 20" stroke="#d0d0d0" strokeWidth="2"><path d="M2 18L18 2" /></svg>
);
const Twirl = () => (
  <svg width="10" height="16" viewBox="0 0 10 16" fill="none" stroke="#c4c4c4" strokeWidth="3"><path d="M1.500 2l6 6-6 6" /></svg>
);
const Star = () => (
  <svg width="22" height="20" viewBox="0 0 22 20" fill={c.icon}><path d="M11 1l2.500 7H20l-5.300 4 2 7L11 14.800 5.300 19l2-7L2 8h6.500z" /></svg>
);
const MatteIcon = () => (
  <svg width="20" height="20" viewBox="0 0 20 20"><path fill={c.icon} d="M0 0h20v20H0z" /><circle cx="10" cy="10" r="6" fill="#1a1a1a" /></svg>
);
const MaskIcon = () => (
  <svg width="20" height="20" viewBox="0 0 20 20"><path d="M1.500 1.500h17v17h-17z" fill="#111" stroke={c.icon} strokeWidth="1.600" /><circle cx="10" cy="10" r="4" fill={c.icon} /></svg>
);
const Film = ({ s = 20 }: { s?: number }) => (
  <svg width={s} height={s} viewBox="0 0 20 20"><path fill="#8a8a8a" d="M0 4h3v13h12v3H0z" /><path fill={c.icon} d="M4 0h16v16H4z" /><path d="M6.500 1v15M17.500 1v15" stroke="#333" strokeDasharray="1.500 1.500" /><path d="M9 8h6" stroke="#222" strokeWidth="1.500" /></svg>
);
const Blur = () => (
  <svg width="22" height="22" viewBox="0 0 22 22" fill="none" stroke={c.icon} strokeWidth="1.700"><circle cx="7" cy="15" r="5.500" /><circle cx="10" cy="12" r="6" fill={c.panel} /><circle cx="14" cy="8" r="6.500" fill="#777" /></svg>
);
const Cube = () => (
  <svg width="18" height="20" viewBox="0 0 18 20" fill="none" stroke={c.icon} strokeWidth="2"><path d="M9 2l7 3.500v8L9 18l-7-4.500v-8zM2 5.500L9 9l7-3.500M9 9v9" /></svg>
);

type L = { n: number; name: string; t: "null" | "shape" | "psd"; c: string; bar: string; w: number; parent: string; both?: boolean; sun?: boolean; matte?: boolean; h: number; end?: boolean };
const RED = "#763838";
const BLU = "#4e5a8c";
const LAV = "#74728a";
const layers: L[] = [
  { n: 55, name: "Null 7", t: "null", c: c.red, bar: RED, w: 796, parent: "None", both: true, h: 27 },
  { n: 56, name: "Null 1", t: "null", c: c.red, bar: RED, w: 583, parent: "55. Null 7", both: true, h: 27 },
  { n: 57, name: "Shape Layer 45", t: "shape", c: c.indigo, bar: BLU, w: 583, parent: "56. Null 1", sun: true, h: 28 },
  { n: 58, name: "Shape Layer 44", t: "shape", c: c.indigo, bar: BLU, w: 583, parent: "56. Null 1", sun: true, h: 27 },
  { n: 59, name: "Null 3", t: "null", c: c.red, bar: RED, w: 583, parent: "56. Null 1", both: true, h: 27 },
  { n: 60, name: "Shape Layer 43", t: "shape", c: c.indigo, bar: BLU, w: 796, parent: "64. Avalon Logo", sun: true, matte: true, h: 27 },
  { n: 61, name: "pointer outline", t: "psd", c: c.lavender, bar: LAV, w: 796, parent: "64. Avalon Logo", both: true, matte: true, h: 8 },
];
const LayerRow = ({ l }: { l: L }) => (
  <Row $h={l.h} $end={l.end}>
    <td><Spacer $w={15} /><Box $off={!l.both} /><Box /></td>
    <td><Twirl /></td>
    <td><Chip $c={l.c} $w={20} $h={20} /></td>
    <td>{l.n}</td>
    <td>
      {l.t === "null" && <NullIcon />}
      {l.t === "shape" && <Star />}
      {l.t === "psd" && <PsdIcon />}
      {l.matte && <MaskIcon />}
      <LayerName>{l.name}</LayerName>
    </td>
    <td><Select w={72} h={22} clip={33} v="None" label={`Mode ${l.n}`} /></td>
    <td><Box $off={l.matte} /></td>
    <td><Spiral dots /></td>
    <td><Select w={72} h={22} clip={33} v="None" label={`Track matte ${l.n}`} /></td>
    <SwitchCell>
      <Box><Shy /></Box>
      <Box $lit={l.sun}>{l.sun && <Sun dim />}</Box>
      <Box><Slash /></Box>
      <Spacer $w={44} />
      <Box />
      <Box $off={l.n === 60} />
      <Box />
    </SwitchCell>
    <td><Spiral /></td>
    <td><Select w={141} h={22} clip={104} v={l.parent} label={`Parent ${l.n}`} /></td>
    <Track><Bar $w={l.w} $c={l.bar} /></Track>
  </Row>
);

const TimelinePanel = () => (
  <Timeline>
    <Tabs>
      <Tab $ml={7} $gap={17}><Chip $c={c.sand} />master v3</Tab>
      <Tab $ml={89}>Render Queue</Tab>
      <Tab $active $ml={62} $pl={2} $gap={14}>
        <Close />
        <Chip $c={c.sand} />
        <LayerName>main comp</LayerName>
        <Hamburger />
      </Tab>
    </Tabs>
    <Split>
      <Controls>
        <Clock>
          <strong>0:03:09:52</strong>
          <span>11386 (59.964 fps)</span>
        </Clock>
        <SearchBox>
          <svg width="26" height="22" viewBox="0 0 26 22" fill="none" stroke="#c4c4c4" strokeWidth="2">
            <circle cx="7" cy="8" r="5.500" /><path d="M11 12l6 7M17 9l4 4 4-4" />
          </svg>
          <input aria-label="Search layers" />
        </SearchBox>
        <Spacer $w={13} />
        <Tool $w={38}><I f><path d="M0 4h3l2 2h4v4H5L3 8H0zM12 4h5v5h-5zM9 6h10v2H9zM18 4h7v5h-7zM14 8h2v8h3v2h-5zM18 13h7v6h-7zM19 21h7l-3 4z" /></I></Tool>
        <Tool $w={38}><svg width="26" height="26" viewBox="0 0 26 26" fill={c.icon}><path d="M0 17h26v7H0z" fill="#4a4a4a" /><path d="M6 12q0-9 7-9t7 9zM1 12h24v2H1zM11 12h4v11h-4z" /><circle cx="10.500" cy="8" r="1.500" fill="#1e1e1e" /><circle cx="15.500" cy="8" r="1.500" fill="#1e1e1e" /></svg></Tool>
        <Tool $w={38}><Film s={24} /></Tool>
        <Spacer $w={2} />
        <ViewTool $w={34} $fill="#4a4a4a"><Blur /></ViewTool>
        <Spacer $w={2} />
        <Tool $w={38}><I><path d="M3 5h22v19H3zM5 8q8 0 10 6 2 5 8 5M8 1v4M13 1v4M18 1v4M23 2v3M0 10h3M0 15h3M0 20h3" strokeWidth="1.800" /></I></Tool>
        <Spacer $w={16} />
      </Controls>
      <div>
        <TimeNav><i /><i /><i /><i /></TimeNav>
        <Ruler>
          {["02s", "03s", "04s", "05s", "06s", "07s", "08s", "09s", "10s"].map((t) => <li key={t}>{t}</li>)}
        </Ruler>
      </div>
    </Split>
    <LayerTable>
      <thead>
        <HeadRow>
          <th>
            <svg width="20" height="20" viewBox="0 0 20 20" fill={c.icon}><path d="M-6 6h6l6-5v18l-6-5h-6z" /><path d="M9 6q3 4 0 8M12 3q6 7 0 14" fill="none" stroke={c.icon} strokeWidth="1.800" /></svg>
            <svg width="14" height="12" viewBox="0 0 14 12"><circle cx="8" cy="6" r="5.500" fill={c.icon} /></svg>
            <Spacer $w={2} />
            <svg width="16" height="18" viewBox="0 0 16 18"><path fill={c.icon} d="M1 7h14v10H1z" /><path d="M4 8V5q0-4 4-4t4 4v3" fill="none" stroke={c.icon} strokeWidth="2.200" /><circle cx="8" cy="12" r="1.800" fill="#1e1e1e" /></svg>
            <Divider $h={18} $m={5} />
            <Spacer $w={7} />
            <TagIcon />
            <Divider $h={18} $m={2} />
          </th>
          <th>#<Spacer /><Divider $h={18} $m={6} /></th>
          <th>Source Name<Spacer /><Divider $h={18} $m={6} /></th>
          <th>Mode</th>
          <th><Spacer $w={5} />T</th>
          <th>Track Matte</th>
          <th><MatteIcon /><svg width="20" height="20" viewBox="0 0 20 20"><path fill={c.icon} d="M0 0h20L0 20z" /><circle cx="9" cy="9" r="6" fill="#1a1a1a" /><path d="M5 14L15 4q3 6-2 9-5 3-8 1z" fill={c.icon} /></svg><Divider $h={18} $m={2} /></th>
          <th>
            <Shy /><Sun />
            <svg width="22" height="20" viewBox="0 0 22 20" stroke={c.icon} strokeWidth="3" strokeDasharray="3 2"><path d="M3 2l16 16" /></svg>
            <svg width="22" height="22" viewBox="0 0 22 22" fill="none" stroke={c.icon} strokeWidth="2"><path d="M12 2q-4-2-5 4L4 19q-1 2-3 1M3 8h8M11 9q3-1 4 4t5 4M20 9q-4 1-9 8" /></svg>
            <Film /><Blur />
            <svg width="20" height="20" viewBox="0 0 20 20"><circle cx="10" cy="10" r="8" fill="none" stroke={c.icon} strokeWidth="2" /><path d="M4 16A8 8 0 0116 4z" fill={c.icon} transform="rotate(180 10 10)" /></svg>
            <Cube />
            <Spacer />
            <Divider $h={18} $m={6} />
          </th>
          <th>Parent &amp; Link<Spacer /><Divider $h={18} $m={0} /><Spacer $w={22} /></th>
          <th />
          <th>
            <WorkArea><i /><Marker>end</Marker></WorkArea>
          </th>
        </HeadRow>
      </thead>
      <tbody>
        <LayerRow l={{ n: 54, name: "marking...t screen.psd", t: "psd", c: c.lavender, bar: LAV, w: 583, parent: "None", h: 11, end: true }} />
        <Row $h={27} $prop>
          <td /><td /><td />
          <td><Spacer $w={20} /><Stopwatch /></td>
          <td><Spacer $w={1} />Scale</td>
          <td /><td /><td /><td />
          <SwitchCell>
            <svg width="24" height="14" viewBox="0 0 24 14" fill="none" stroke="#c4c4c4" strokeWidth="2.400"><path d="M13 7q0-4-4-4H6Q2 3 2 7t4 4h3M9 7q0 4 4 4h3q4 0 4-4t-4-4h-3" /></svg>
            <Value><em>100.0</em>,<em>100.0</em>%</Value>
          </SwitchCell>
          <td><Spacer $w={15} /><Spiral /></td>
          <td />
          <PropTrack />
        </Row>
        {layers.map((l) => <LayerRow key={l.n} l={l} />)}
      </tbody>
    </LayerTable>
    <Bottom>
      <svg width="120" height="8" viewBox="0 0 120 8" fill="none" stroke={c.icon} strokeWidth="2">
        <rect x="4" y="1" width="22" height="12" rx="5" fill="#4a4a4a" stroke="none" />
        <path d="M8 8q6-8 12 0M41 4v4M50 4v4M68 8q5-6 10 0" />
      </svg>
      <Knob />
      <i />
    </Bottom>
    <Playhead>
      <svg width="30" height="265" viewBox="0 0 30 265">
        <path d="M10 22v243" stroke={c.blue} strokeWidth="2" />
        <path d="M2 0h17v12l-8.500 11L2 12z" fill={c.blue} />
        <path d="M10.500 12v10M8 12h5" stroke="#123" strokeWidth="1.500" />
        <path d="M14 48v-7l8-10 8 10v7z" fill="#c4c4c4" stroke="#111" strokeWidth="1" />
        <path d="M9 50h5v5H9zM18 50h3v5h-3z" fill="#19b52a" />
        <path d="M6 74h4M11 74h4M6 88h4M11 88h4M10.500 74v14" stroke="#cfcfcf" strokeWidth="1.800" />
      </svg>
    </Playhead>
  </Timeline>
);

/* ---------- main toolbar ---------- */
const MainTools = () => (
  <ToolBar>
    <ToolGroup>
      <Tool $w={18}>
        <svg width="18" height="24" viewBox="0 0 18 24" fill={c.icon}><path d="M0 3l10 10H7v9H2v-6H0z" /></svg>
      </Tool>
      <Divider />
      <Tool $fill="#0a6cf0"><svg width="26" height="28" viewBox="0 0 26 28" fill="#fff"><path d="M5 1l19 17H14l-9 8z" /></svg></Tool>
      <Tool><I f><path d="M8 25q-2-4-6-9-2-2-.5-3T5 14l2 2L4.500 6q-.2-2 1-2T7.500 6L10 13l-.5-10q0-2 1.500-2t1.500 2L13 12l2-9q.5-2 2-1.500T18 4l-1.500 9L20 6.500q1-1.500 2-1t.5 2.500L20 17q-1 5-3 8z" /></I></Tool>
      <Tool><I s={28}><circle cx="11" cy="10" r="8" /><path d="M16 17l8 8" strokeWidth="3" /></I></Tool>
      <Divider />
      <Tool><I s={28}><circle cx="15" cy="8" r="5" fill="currentColor" stroke="none" /><path d="M8 7Q0 11 5 17q4 4 10 1M19 9q6 2 3 8-3 4-8 3M11 10l-5-4-2 6M12 15l4 3-3 4" strokeWidth="2.200" /><Corner /></I></Tool>
      <Tool><I s={28}><path d="M12 4v18M3 13h18" strokeWidth="2.500" /><path d="M12 1l4 5H8zM12 25l4-5H8zM0 13l5-4v8zM24 13l-5-4v8z" fill="currentColor" stroke="none" /><Corner /></I></Tool>
      <Tool><I s={28}><path d="M12 4v18" strokeWidth="2.500" /><path d="M12 1l4 5H8zM12 25l6-6H6z" fill="currentColor" stroke="none" /><Corner /></I></Tool>
      <Divider />
      <Tool><I><path d="M2 3v7h7M3 9q6-8 14-5 7 3 7 10" strokeWidth="2.400" /><path d="M24 15q-3 9-11 9-7-1-9-9" strokeWidth="2.400" strokeDasharray="2 2.500" /></I></Tool>
      <Tool><I s={28}><path d="M2 2h22v22H2z" strokeDasharray="5 2 2 2" /><path d="M13 4l3 4h-6zM13 22l3-4h-6zM4 13l4-3v6zM22 13l-4-3v6zM10 10l2 2M16 10l-2 2M10 16l2-2M16 16l-2-2" fill="currentColor" strokeWidth="1" /></I></Tool>
      <Divider />
      <Tool><I s={28}><path d="M1.500 2.500h21v21h-21z" fill="#4a4a4a" /><Corner /></I></Tool>
      <Tool><I s={28}><path d="M1 24l4-14 8-3 5 5-3 8zM14 5l3-4 6 6-4 4z" fill="currentColor" stroke="none" /><path d="M2 23l7-8" stroke="#1e1e1e" strokeWidth="1.500" /><circle cx="10" cy="14" r="1.800" fill="#1e1e1e" stroke="none" /><Corner /></I></Tool>
      <Tool><I s={28}><path d="M3 8V3h18v5M12 3v20M8 23h8" strokeWidth="3" /><Corner /></I></Tool>
      <Divider />
      <Tool><I f><path d="M25 1q-8 4-14 12l4 4Q22 9 25 1zM9 14l5 5q-3 6-13 6 4-3 4-6t4-5z" /></I></Tool>
      <Tool><I f><path d="M13 1q4 0 4 4 0 2-2 4-1 2 0 6h8q2 0 2 4H1q0-4 2-4h8q1-4 0-6-2-2-2-4 0-4 4-4zM2 21h22v3H2z" /></I></Tool>
      <Tool><I><path d="M13 3l10 8-11 13H8l-6-7z" /><path d="M14 1l11 9-9 10L5 12z" fill="currentColor" stroke="none" /></I></Tool>
      <Divider />
      <Tool><I s={28}><circle cx="7" cy="3" r="2.500" fill="currentColor" stroke="none" /><path d="M7 6v8l4 8M7 14l-4 9M2 12l4-5 5 5" strokeWidth="2.200" /><path d="M25 2q-6 4-8 10l2 2q5-5 6-12zM15 13l3 3q-2 6-8 6 3-3 5-9z" fill="currentColor" stroke="none" /><Corner /></I></Tool>
      <Divider />
      <Tool><I s={28} f><path d="M14 1l8 8-2 1-4 5v5l-5-5-9 9 8-10-5-5 5-1 5-4z" /><path d="M26 20v6h-5z" /></I></Tool>
    </ToolGroup>
    <ToolGroup $start={29}>
      <Tool $w={38} $fill="#4a4a4a"><I><path d="M13 4v11L4 21M13 15l9 6" /><path d="M13 1l4 5H9zM1 23l1-6 4 5zM25 23l-1-6-4 5z" fill="currentColor" stroke="none" /></I></Tool>
      <Spacer $w={3} />
      <Tool $w={38}><I><circle cx="13" cy="14" r="3.500" /><path d="M13 4v7M10 16l-6 5M16 16l6 5" /><path d="M13 1l4 5H9zM1 23l1-6 4 5zM25 23l-1-6-4 5z" fill="currentColor" stroke="none" /></I></Tool>
      <Spacer $w={3} />
      <Tool $w={38}><I><path d="M6 11l16-6v12L6 22zM4 4l6 6M15 15l6 7" strokeWidth="1.700" /><path d="M1 1h7l-7 7z" fill="currentColor" stroke="none" /></I></Tool>
      <Divider $m={11} />
      <Tool $w={38} $fill="#4a4a4a"><I s={28} f><path d="M4 1l19 18H13l-9 7z" fill="#d2d2d2" /></I></Tool>
      <Spacer $w={3} />
      <Tool $w={38}><I><path d="M13 2v22M2 13h22" strokeWidth="2.400" /><path d="M13 1l3 4h-6zM13 25l3-4h-6zM1 13l4-3v6zM25 13l-4-3v6z" fill="currentColor" stroke="none" /></I></Tool>
      <Spacer $w={3} />
      <Tool $w={38}><I><path d="M2 2h22v22H2z" strokeWidth="2.500" /><path d="M4 13h9v10" strokeDasharray="1.500 1.500" strokeWidth="1.500" /></I></Tool>
      <Spacer $w={3} />
      <Tool $w={38}><I><path d="M4 9q4-7 11-7 9 1 10 10 0 9-9 11-7 0-10-6" strokeWidth="2.800" /><path d="M1 5v8h8z" fill="currentColor" stroke="none" /></I></Tool>
      <Spacer $w={5} />
      <ToolLabel as="span">Universal</ToolLabel>
      <Divider $m={9} />
      <Check type="checkbox" id="snap" />
      <Spacer $w={14} />
      <ToolLabel htmlFor="snap">Snapping</ToolLabel>
      <Spacer $w={23} />
      <Tool $w={38}><I s={24}><path d="M5 24l7-9 8 9M12 15V10" /><path d="M13 11l8-7" strokeDasharray="3 2" /><path d="M16 1h8v8z" fill="currentColor" stroke="none" /></I></Tool>
      <Spacer $w={5} />
      <Tool $w={38} $fill="#4a4a4a"><I><path d="M2 7V2h5M19 2h5v5M24 19v5h-5M7 24H2v-5M12 2h2M12 24h2M2 13v1M24 13v1" strokeWidth="2.200" /><path d="M8 8l2 2M18 8l-2 2M8 18l2-2M18 18l-2-2M13 10v1M13 15v1" /></I></Tool>
      <Divider $m={11} />
      <Spacer $w={5} />
      <ToolLabel as="span" $blue>Fill:</ToolLabel>
      <Spacer $w={7} />
      <PaintButton>?</PaintButton>
      <Spacer $w={16} />
      <ToolLabel as="span" $blue>Stroke:</ToolLabel>
      <Spacer $w={7} />
      <PaintButton>?</PaintButton>
      <Spacer $w={7} />
      <ToolLabel as="span" $blue>–</ToolLabel>
      <Spacer $w={7} />
      <ToolLabel as="span">px</ToolLabel>
      <Spacer $w={54} />
      <ToolLabel as="span">Add:</ToolLabel>
      <Spacer $w={8} />
      <Tool $w={38}><svg width="22" height="22" viewBox="0 0 22 22"><circle cx="11" cy="11" r="11" fill={c.icon} /><path d="M8 5l7 6-7 6z" fill="#1e1e1e" /></svg></Tool>
      <Divider $m={11} />
      <Tool $w={24}><svg width="22" height="22" viewBox="0 0 22 22"><path fill={c.icon} d="M0 1h9l2 2h11v19H0z" /><path d="M9 8v9l-6-4.500zM13 8v9l6-4.500z" fill="#1e1e1e" /><path d="M12 1h10" stroke={c.icon} strokeWidth="2" /></svg></Tool>
      <Spacer $w={20} />
      <CheckWrap>
        <Check type="checkbox" defaultChecked aria-label="Panel option" />
        <svg width="16" height="16" viewBox="0 0 16 16" fill="none" stroke="#111" strokeWidth="2.600"><path d="M2 8l4 5 7-11" /></svg>
      </CheckWrap>
    </ToolGroup>
  </ToolBar>
);

export default function App() {
  return (
    <Shell>
      <Global />
      <MenuBar>
        {["File", "Edit", "Composition", "Layer", "Effect", "Animation", "View", "Window", "Help"].map((m) => (
          <a key={m} href="#">{m}</a>
        ))}
      </MenuBar>
      <MainTools />
      <Panels>
        <ProjectPanel />
        <CompPanel />
        <SidePanel />
      </Panels>
      <TimelinePanel />
    </Shell>
  );
}
